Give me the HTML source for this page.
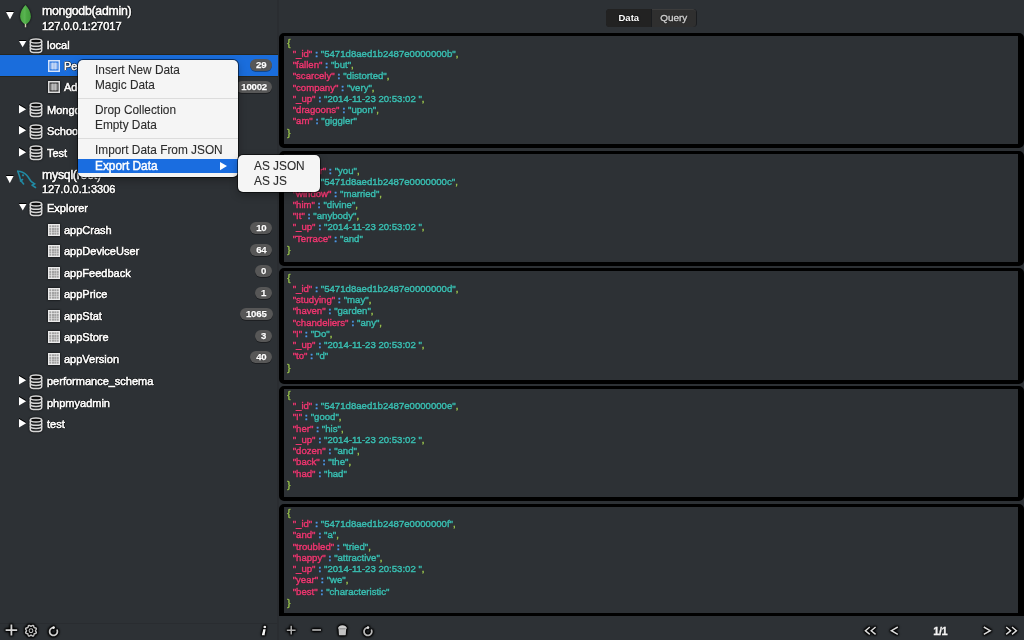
<!DOCTYPE html>
<html><head><meta charset="utf-8">
<style>
*{margin:0;padding:0;box-sizing:border-box}
html,body{width:1024px;height:640px;overflow:hidden;background:#2d3135;font-family:"Liberation Sans",sans-serif;color:#fff}
.mt{-webkit-text-stroke:0.1px currentColor}
.t,.j,.mt,.seg{position:absolute;white-space:nowrap;line-height:20px}
.t{text-shadow:1px 0 0.5px rgba(0,0,0,.75),-1px 0 0.5px rgba(0,0,0,.75),0 1px 0.5px rgba(0,0,0,.75),0 -1px 0.5px rgba(0,0,0,.75);-webkit-text-stroke:0.55px #fff}
.j{-webkit-text-stroke:0.45px currentColor;text-shadow:0 0 1px rgba(0,0,0,.7)}
.j span{-webkit-text-stroke:0.45px currentColor}
.seg{font-weight:bold;text-shadow:0 0 1.5px #000}
.ic{position:absolute;display:block;overflow:visible}
.tsh{filter:drop-shadow(0 0 1px #000) drop-shadow(0 0 1px #000) drop-shadow(0 0 0.5px #000)}
.sh2{filter:drop-shadow(0 -0.5px 0.5px #000) drop-shadow(0 0 0.6px rgba(0,0,0,.8))}
.sh{filter:drop-shadow(0 0 0.8px rgba(0,0,0,.9))}
.sel{position:absolute;left:0;width:277.5px;background:#1a6ddc}
.badge{position:absolute;height:12px;border-radius:6px;background:#575757;color:#fff;font-size:9.6px;font-weight:bold;line-height:12px;letter-spacing:-0.2px;text-align:center;box-shadow:0 1px 0 rgba(0,0,0,.35);text-shadow:0 0 1px #000;-webkit-text-stroke:0.25px #fff}
.card{position:absolute;left:279px;width:745px;background:#2d3135;border-style:solid;border-color:#000;border-width:3px 6px 4px 5px;border-radius:5px}
.k{color:#ec3871}.v{color:#3bbdb1}.c{color:#4e96e2;font-weight:bold}.p{color:#98c04e}
.menu{position:absolute;background:#f5f5f5;border-radius:5px;box-shadow:0 0 0 1px rgba(0,0,0,.55),0 3px 8px rgba(0,0,0,.3)}
.msep{position:absolute;left:78px;width:159.5px;height:1px;background:#dcdcdc}
#sep{position:absolute;left:277.3px;top:0;width:1.5px;height:640px;background:#2a2d31}
#tb1{position:absolute;left:0;top:623px;width:277.3px;height:1px;background:#292c30}
</style></head><body><div id="root" style="position:absolute;left:0;top:0;width:1024px;height:640px;will-change:transform;background:#2d3135">
<div id="sep"></div>
<div id="tb1"></div>
<svg class="ic sh2" style="left:5.6px;top:12.4px" width="7.9" height="7.6" viewBox="0 0 7.9 7.6"><path d="M0 0H7.9L3.95 7.6Z" fill="#fff"/></svg>
<svg class="ic sh" style="left:19px;top:4px" width="13" height="24" viewBox="0 0 13 24"><defs><linearGradient id="lg" x1="0" x2="1" y1="0" y2="0"><stop offset="0" stop-color="#4aa540"/><stop offset="0.45" stop-color="#5ab552"/><stop offset="0.55" stop-color="#4da944"/><stop offset="1" stop-color="#439c3c"/></linearGradient></defs><path d="M6.5 0.9C9.6 4 11.9 8.2 11.9 12.6C11.9 16.4 9.5 18.9 7.1 20.3L6.5 20.9L5.9 20.3C3.5 18.9 1.1 16.4 1.1 12.6C1.1 8.2 3.4 4 6.5 0.9Z" fill="url(#lg)"/><path d="M6.5 19.8V23.3" stroke="#d2ccb4" stroke-width="1.4"/></svg>
<div class="t" style="left:42px;top:0.73px;font-size:12.3px;color:#fdfdfd;letter-spacing:-0.25px">mongodb(admin)</div>
<div class="t" style="left:42px;top:15.86px;font-size:11px;color:#fdfdfd;">127.0.0.1:27017</div>
<svg class="ic sh2" style="left:18.75px;top:40.75px" width="7.3" height="6.3" viewBox="0 0 7.3 6.3"><path d="M0 0H7.3L3.65 6.3Z" fill="#fff"/></svg>
<svg class="ic sh" style="left:29px;top:37.85px" width="14" height="16" viewBox="0 0 14 16"><g fill="none" stroke="#d6d6d6" stroke-width="1.5"><ellipse cx="7" cy="3" rx="5.7" ry="2.0" fill="#0c0c0c"/><path d="M1.3 3V12.4c0 1.2 2.55 2.1 5.7 2.1s5.7-.9 5.7-2.1V3"/><path d="M1.3 6.2c0 1.2 2.55 2.1 5.7 2.1s5.7-.9 5.7-2.1"/><path d="M1.3 9.3c0 1.2 2.55 2.1 5.7 2.1s5.7-.9 5.7-2.1"/></g></svg>
<div class="t" style="left:47px;top:35.36px;font-size:11px;color:#fdfdfd;">local</div>
<div style="position:absolute;left:0;top:54.2px;width:277.5px;height:23.2px;background:#25261f"></div><div class="sel" style="top:55.2px;height:21.1px"></div>
<svg class="ic" style="left:48px;top:59.75px" width="12" height="12" viewBox="0 0 12 12"><rect x="0.75" y="0.75" width="10.5" height="10.5" fill="#1a6de0" stroke="#d6e4fa" stroke-width="1.5"/><rect x="2.4" y="2.6" width="7.2" height="6.8" fill="#a2c0f0"/><path d="M4.8 2.6V9.4M7.2 2.6V9.4" stroke="#d6e4fa" stroke-width="0.9"/></svg>
<div class="t" style="left:64px;top:55.86px;font-size:11px;color:#fdfdfd;">People</div>
<div class="badge" style="left:250px;top:59.10px;width:22.30000000000001px">29</div>
<svg class="ic sh" style="left:48px;top:81.25px" width="12" height="12" viewBox="0 0 12 12"><rect x="0.75" y="0.75" width="10.5" height="10.5" fill="#2a2a2a" stroke="#dedede" stroke-width="1.5"/><rect x="2.4" y="2.6" width="7.2" height="6.8" fill="#9e9e9e"/><path d="M4.8 2.6V9.4M7.2 2.6V9.4" stroke="#d0d0d0" stroke-width="0.9"/></svg>
<div class="t" style="left:64px;top:77.36px;font-size:11px;color:#fdfdfd;">Address</div>
<div class="badge" style="left:236px;top:80.60px;width:36.30000000000001px">10002</div>
<svg class="ic sh2" style="left:18.7px;top:104.65px" width="7.2" height="8.4" viewBox="0 0 7.2 8.4"><path d="M0 0L7.2 4.2L0 8.4Z" fill="#fff"/></svg>
<svg class="ic sh" style="left:29px;top:102.35px" width="14" height="16" viewBox="0 0 14 16"><g fill="none" stroke="#d6d6d6" stroke-width="1.5"><ellipse cx="7" cy="3" rx="5.7" ry="2.0" fill="#0c0c0c"/><path d="M1.3 3V12.4c0 1.2 2.55 2.1 5.7 2.1s5.7-.9 5.7-2.1V3"/><path d="M1.3 6.2c0 1.2 2.55 2.1 5.7 2.1s5.7-.9 5.7-2.1"/><path d="M1.3 9.3c0 1.2 2.55 2.1 5.7 2.1s5.7-.9 5.7-2.1"/></g></svg>
<div class="t" style="left:47px;top:99.86px;font-size:11px;color:#fdfdfd;">MongoDB</div>
<svg class="ic sh2" style="left:18.7px;top:126.15px" width="7.2" height="8.4" viewBox="0 0 7.2 8.4"><path d="M0 0L7.2 4.2L0 8.4Z" fill="#fff"/></svg>
<svg class="ic sh" style="left:29px;top:123.85px" width="14" height="16" viewBox="0 0 14 16"><g fill="none" stroke="#d6d6d6" stroke-width="1.5"><ellipse cx="7" cy="3" rx="5.7" ry="2.0" fill="#0c0c0c"/><path d="M1.3 3V12.4c0 1.2 2.55 2.1 5.7 2.1s5.7-.9 5.7-2.1V3"/><path d="M1.3 6.2c0 1.2 2.55 2.1 5.7 2.1s5.7-.9 5.7-2.1"/><path d="M1.3 9.3c0 1.2 2.55 2.1 5.7 2.1s5.7-.9 5.7-2.1"/></g></svg>
<div class="t" style="left:47px;top:121.36px;font-size:11px;color:#fdfdfd;">School</div>
<svg class="ic sh2" style="left:18.7px;top:147.65px" width="7.2" height="8.4" viewBox="0 0 7.2 8.4"><path d="M0 0L7.2 4.2L0 8.4Z" fill="#fff"/></svg>
<svg class="ic sh" style="left:29px;top:145.35px" width="14" height="16" viewBox="0 0 14 16"><g fill="none" stroke="#d6d6d6" stroke-width="1.5"><ellipse cx="7" cy="3" rx="5.7" ry="2.0" fill="#0c0c0c"/><path d="M1.3 3V12.4c0 1.2 2.55 2.1 5.7 2.1s5.7-.9 5.7-2.1V3"/><path d="M1.3 6.2c0 1.2 2.55 2.1 5.7 2.1s5.7-.9 5.7-2.1"/><path d="M1.3 9.3c0 1.2 2.55 2.1 5.7 2.1s5.7-.9 5.7-2.1"/></g></svg>
<div class="t" style="left:47px;top:142.86px;font-size:11px;color:#fdfdfd;">Test</div>
<svg class="ic sh2" style="left:5.8px;top:175.8px" width="7.6" height="7.3" viewBox="0 0 7.6 7.3"><path d="M0 0H7.6L3.8 7.3Z" fill="#fff"/></svg>
<svg class="ic" style="left:16px;top:169px" width="22" height="21" viewBox="0 0 22 21"><g fill="none" stroke="#2189a3" stroke-width="1.6" stroke-linecap="round" stroke-linejoin="round"><path d="M1.8 2.2C4.5 2.2 8 3.5 10.5 6C12.5 8 13.5 10.5 15 12.3C16 13.5 17.5 14 18.8 14.8L16 16.2L19.5 18.5"/><path d="M1.8 2.2C2.5 4.5 3.5 6.5 4 9C4.3 10.5 4.5 12 6 13L7.6 15"/><path d="M6.5 10.5L4.5 12"/></g><circle cx="7" cy="6.3" r="1.1" fill="#2189a3"/></svg>
<div class="t" style="left:42px;top:164.53px;font-size:12.3px;color:#fdfdfd;letter-spacing:-0.25px">mysql(root)</div>
<div class="t" style="left:42px;top:179.26px;font-size:11px;color:#fdfdfd;">127.0.0.1:3306</div>
<svg class="ic sh2" style="left:18.75px;top:203.75px" width="7.5" height="6.5" viewBox="0 0 7.5 6.5"><path d="M0 0H7.5L3.75 6.5Z" fill="#fff"/></svg>
<svg class="ic sh" style="left:29px;top:201.10px" width="14" height="16" viewBox="0 0 14 16"><g fill="none" stroke="#d6d6d6" stroke-width="1.5"><ellipse cx="7" cy="3" rx="5.7" ry="2.0" fill="#0c0c0c"/><path d="M1.3 3V12.4c0 1.2 2.55 2.1 5.7 2.1s5.7-.9 5.7-2.1V3"/><path d="M1.3 6.2c0 1.2 2.55 2.1 5.7 2.1s5.7-.9 5.7-2.1"/><path d="M1.3 9.3c0 1.2 2.55 2.1 5.7 2.1s5.7-.9 5.7-2.1"/></g></svg>
<div class="t" style="left:47px;top:198.36px;font-size:11px;color:#fdfdfd;">Explorer</div>
<svg class="ic sh" style="left:48px;top:223.6px" width="12" height="12" viewBox="0 0 12 12"><rect x="0" y="0" width="12" height="12" fill="#ebebeb"/><g fill="#a2a2a2"><rect x="1.3" y="1.3" width="2" height="2"/><rect x="4" y="1.3" width="2" height="2"/><rect x="6.3" y="1.3" width="2" height="2"/><rect x="8.7" y="1.3" width="2" height="2"/><rect x="1.3" y="4" width="2" height="2"/><rect x="4" y="4" width="2" height="2"/><rect x="6.3" y="4" width="2" height="2"/><rect x="8.7" y="4" width="2" height="2"/><rect x="1.3" y="6.3" width="2" height="2"/><rect x="4" y="6.3" width="2" height="2"/><rect x="6.3" y="6.3" width="2" height="2"/><rect x="8.7" y="6.3" width="2" height="2"/><rect x="1.3" y="8.7" width="2" height="2"/><rect x="4" y="8.7" width="2" height="2"/><rect x="6.3" y="8.7" width="2" height="2"/><rect x="8.7" y="8.7" width="2" height="2"/></g></svg>
<div class="t" style="left:64px;top:219.71px;font-size:11px;color:#fdfdfd;">appCrash</div>
<div class="badge" style="left:250.2px;top:222.40px;width:22.30000000000001px">10</div>
<svg class="ic sh" style="left:48px;top:245.1px" width="12" height="12" viewBox="0 0 12 12"><rect x="0" y="0" width="12" height="12" fill="#ebebeb"/><g fill="#a2a2a2"><rect x="1.3" y="1.3" width="2" height="2"/><rect x="4" y="1.3" width="2" height="2"/><rect x="6.3" y="1.3" width="2" height="2"/><rect x="8.7" y="1.3" width="2" height="2"/><rect x="1.3" y="4" width="2" height="2"/><rect x="4" y="4" width="2" height="2"/><rect x="6.3" y="4" width="2" height="2"/><rect x="8.7" y="4" width="2" height="2"/><rect x="1.3" y="6.3" width="2" height="2"/><rect x="4" y="6.3" width="2" height="2"/><rect x="6.3" y="6.3" width="2" height="2"/><rect x="8.7" y="6.3" width="2" height="2"/><rect x="1.3" y="8.7" width="2" height="2"/><rect x="4" y="8.7" width="2" height="2"/><rect x="6.3" y="8.7" width="2" height="2"/><rect x="8.7" y="8.7" width="2" height="2"/></g></svg>
<div class="t" style="left:64px;top:241.21px;font-size:11px;color:#fdfdfd;">appDeviceUser</div>
<div class="badge" style="left:250.2px;top:243.90px;width:22.30000000000001px">64</div>
<svg class="ic sh" style="left:48px;top:266.6px" width="12" height="12" viewBox="0 0 12 12"><rect x="0" y="0" width="12" height="12" fill="#ebebeb"/><g fill="#a2a2a2"><rect x="1.3" y="1.3" width="2" height="2"/><rect x="4" y="1.3" width="2" height="2"/><rect x="6.3" y="1.3" width="2" height="2"/><rect x="8.7" y="1.3" width="2" height="2"/><rect x="1.3" y="4" width="2" height="2"/><rect x="4" y="4" width="2" height="2"/><rect x="6.3" y="4" width="2" height="2"/><rect x="8.7" y="4" width="2" height="2"/><rect x="1.3" y="6.3" width="2" height="2"/><rect x="4" y="6.3" width="2" height="2"/><rect x="6.3" y="6.3" width="2" height="2"/><rect x="8.7" y="6.3" width="2" height="2"/><rect x="1.3" y="8.7" width="2" height="2"/><rect x="4" y="8.7" width="2" height="2"/><rect x="6.3" y="8.7" width="2" height="2"/><rect x="8.7" y="8.7" width="2" height="2"/></g></svg>
<div class="t" style="left:64px;top:262.71px;font-size:11px;color:#fdfdfd;">appFeedback</div>
<div class="badge" style="left:254.8px;top:265.40px;width:17.69999999999999px">0</div>
<svg class="ic sh" style="left:48px;top:288.1px" width="12" height="12" viewBox="0 0 12 12"><rect x="0" y="0" width="12" height="12" fill="#ebebeb"/><g fill="#a2a2a2"><rect x="1.3" y="1.3" width="2" height="2"/><rect x="4" y="1.3" width="2" height="2"/><rect x="6.3" y="1.3" width="2" height="2"/><rect x="8.7" y="1.3" width="2" height="2"/><rect x="1.3" y="4" width="2" height="2"/><rect x="4" y="4" width="2" height="2"/><rect x="6.3" y="4" width="2" height="2"/><rect x="8.7" y="4" width="2" height="2"/><rect x="1.3" y="6.3" width="2" height="2"/><rect x="4" y="6.3" width="2" height="2"/><rect x="6.3" y="6.3" width="2" height="2"/><rect x="8.7" y="6.3" width="2" height="2"/><rect x="1.3" y="8.7" width="2" height="2"/><rect x="4" y="8.7" width="2" height="2"/><rect x="6.3" y="8.7" width="2" height="2"/><rect x="8.7" y="8.7" width="2" height="2"/></g></svg>
<div class="t" style="left:64px;top:284.21px;font-size:11px;color:#fdfdfd;">appPrice</div>
<div class="badge" style="left:254.8px;top:286.90px;width:17.69999999999999px">1</div>
<svg class="ic sh" style="left:48px;top:309.6px" width="12" height="12" viewBox="0 0 12 12"><rect x="0" y="0" width="12" height="12" fill="#ebebeb"/><g fill="#a2a2a2"><rect x="1.3" y="1.3" width="2" height="2"/><rect x="4" y="1.3" width="2" height="2"/><rect x="6.3" y="1.3" width="2" height="2"/><rect x="8.7" y="1.3" width="2" height="2"/><rect x="1.3" y="4" width="2" height="2"/><rect x="4" y="4" width="2" height="2"/><rect x="6.3" y="4" width="2" height="2"/><rect x="8.7" y="4" width="2" height="2"/><rect x="1.3" y="6.3" width="2" height="2"/><rect x="4" y="6.3" width="2" height="2"/><rect x="6.3" y="6.3" width="2" height="2"/><rect x="8.7" y="6.3" width="2" height="2"/><rect x="1.3" y="8.7" width="2" height="2"/><rect x="4" y="8.7" width="2" height="2"/><rect x="6.3" y="8.7" width="2" height="2"/><rect x="8.7" y="8.7" width="2" height="2"/></g></svg>
<div class="t" style="left:64px;top:305.71px;font-size:11px;color:#fdfdfd;">appStat</div>
<div class="badge" style="left:240px;top:308.40px;width:32.5px">1065</div>
<svg class="ic sh" style="left:48px;top:331.1px" width="12" height="12" viewBox="0 0 12 12"><rect x="0" y="0" width="12" height="12" fill="#ebebeb"/><g fill="#a2a2a2"><rect x="1.3" y="1.3" width="2" height="2"/><rect x="4" y="1.3" width="2" height="2"/><rect x="6.3" y="1.3" width="2" height="2"/><rect x="8.7" y="1.3" width="2" height="2"/><rect x="1.3" y="4" width="2" height="2"/><rect x="4" y="4" width="2" height="2"/><rect x="6.3" y="4" width="2" height="2"/><rect x="8.7" y="4" width="2" height="2"/><rect x="1.3" y="6.3" width="2" height="2"/><rect x="4" y="6.3" width="2" height="2"/><rect x="6.3" y="6.3" width="2" height="2"/><rect x="8.7" y="6.3" width="2" height="2"/><rect x="1.3" y="8.7" width="2" height="2"/><rect x="4" y="8.7" width="2" height="2"/><rect x="6.3" y="8.7" width="2" height="2"/><rect x="8.7" y="8.7" width="2" height="2"/></g></svg>
<div class="t" style="left:64px;top:327.21px;font-size:11px;color:#fdfdfd;">appStore</div>
<div class="badge" style="left:254.8px;top:329.90px;width:17.69999999999999px">3</div>
<svg class="ic sh" style="left:48px;top:352.6px" width="12" height="12" viewBox="0 0 12 12"><rect x="0" y="0" width="12" height="12" fill="#ebebeb"/><g fill="#a2a2a2"><rect x="1.3" y="1.3" width="2" height="2"/><rect x="4" y="1.3" width="2" height="2"/><rect x="6.3" y="1.3" width="2" height="2"/><rect x="8.7" y="1.3" width="2" height="2"/><rect x="1.3" y="4" width="2" height="2"/><rect x="4" y="4" width="2" height="2"/><rect x="6.3" y="4" width="2" height="2"/><rect x="8.7" y="4" width="2" height="2"/><rect x="1.3" y="6.3" width="2" height="2"/><rect x="4" y="6.3" width="2" height="2"/><rect x="6.3" y="6.3" width="2" height="2"/><rect x="8.7" y="6.3" width="2" height="2"/><rect x="1.3" y="8.7" width="2" height="2"/><rect x="4" y="8.7" width="2" height="2"/><rect x="6.3" y="8.7" width="2" height="2"/><rect x="8.7" y="8.7" width="2" height="2"/></g></svg>
<div class="t" style="left:64px;top:348.71px;font-size:11px;color:#fdfdfd;">appVersion</div>
<div class="badge" style="left:250.2px;top:351.40px;width:22.30000000000001px">40</div>
<svg class="ic sh2" style="left:18.7px;top:375.9px" width="7.2" height="8.4" viewBox="0 0 7.2 8.4"><path d="M0 0L7.2 4.2L0 8.4Z" fill="#fff"/></svg>
<svg class="ic sh" style="left:29px;top:373.60px" width="14" height="16" viewBox="0 0 14 16"><g fill="none" stroke="#d6d6d6" stroke-width="1.5"><ellipse cx="7" cy="3" rx="5.7" ry="2.0" fill="#0c0c0c"/><path d="M1.3 3V12.4c0 1.2 2.55 2.1 5.7 2.1s5.7-.9 5.7-2.1V3"/><path d="M1.3 6.2c0 1.2 2.55 2.1 5.7 2.1s5.7-.9 5.7-2.1"/><path d="M1.3 9.3c0 1.2 2.55 2.1 5.7 2.1s5.7-.9 5.7-2.1"/></g></svg>
<div class="t" style="left:47px;top:371.11px;font-size:11px;color:#fdfdfd;">performance_schema</div>
<svg class="ic sh2" style="left:18.7px;top:397.4px" width="7.2" height="8.4" viewBox="0 0 7.2 8.4"><path d="M0 0L7.2 4.2L0 8.4Z" fill="#fff"/></svg>
<svg class="ic sh" style="left:29px;top:395.10px" width="14" height="16" viewBox="0 0 14 16"><g fill="none" stroke="#d6d6d6" stroke-width="1.5"><ellipse cx="7" cy="3" rx="5.7" ry="2.0" fill="#0c0c0c"/><path d="M1.3 3V12.4c0 1.2 2.55 2.1 5.7 2.1s5.7-.9 5.7-2.1V3"/><path d="M1.3 6.2c0 1.2 2.55 2.1 5.7 2.1s5.7-.9 5.7-2.1"/><path d="M1.3 9.3c0 1.2 2.55 2.1 5.7 2.1s5.7-.9 5.7-2.1"/></g></svg>
<div class="t" style="left:47px;top:392.61px;font-size:11px;color:#fdfdfd;">phpmyadmin</div>
<svg class="ic sh2" style="left:18.7px;top:418.9px" width="7.2" height="8.4" viewBox="0 0 7.2 8.4"><path d="M0 0L7.2 4.2L0 8.4Z" fill="#fff"/></svg>
<svg class="ic sh" style="left:29px;top:416.60px" width="14" height="16" viewBox="0 0 14 16"><g fill="none" stroke="#d6d6d6" stroke-width="1.5"><ellipse cx="7" cy="3" rx="5.7" ry="2.0" fill="#0c0c0c"/><path d="M1.3 3V12.4c0 1.2 2.55 2.1 5.7 2.1s5.7-.9 5.7-2.1V3"/><path d="M1.3 6.2c0 1.2 2.55 2.1 5.7 2.1s5.7-.9 5.7-2.1"/><path d="M1.3 9.3c0 1.2 2.55 2.1 5.7 2.1s5.7-.9 5.7-2.1"/></g></svg>
<div class="t" style="left:47px;top:414.11px;font-size:11px;color:#fdfdfd;">test</div>
<div class="card" style="top:33.0px;height:115.0px;"></div>
<div class="j" style="left:287.3px;top:32.63px;font-size:9.6px;color:#fdfdfd;"><span class="p">{</span></div>
<div class="j" style="left:287.3px;top:43.88px;font-size:9.6px;color:#fdfdfd;">&nbsp;&nbsp;<span class="k">"_id"</span><span class="c"> : </span><span class="v">"5471d8aed1b2487e0000000b"</span><span class="p">,</span></div>
<div class="j" style="left:287.3px;top:55.13px;font-size:9.6px;color:#fdfdfd;">&nbsp;&nbsp;<span class="k">"fallen"</span><span class="c"> : </span><span class="v">"but"</span><span class="p">,</span></div>
<div class="j" style="left:287.3px;top:66.38px;font-size:9.6px;color:#fdfdfd;">&nbsp;&nbsp;<span class="k">"scarcely"</span><span class="c"> : </span><span class="v">"distorted"</span><span class="p">,</span></div>
<div class="j" style="left:287.3px;top:77.63px;font-size:9.6px;color:#fdfdfd;">&nbsp;&nbsp;<span class="k">"company"</span><span class="c"> : </span><span class="v">"very"</span><span class="p">,</span></div>
<div class="j" style="left:287.3px;top:88.88px;font-size:9.6px;color:#fdfdfd;">&nbsp;&nbsp;<span class="k">"_up"</span><span class="c"> : </span><span class="v">"2014-11-23 20:53:02 "</span><span class="p">,</span></div>
<div class="j" style="left:287.3px;top:100.13px;font-size:9.6px;color:#fdfdfd;">&nbsp;&nbsp;<span class="k">"dragoons"</span><span class="c"> : </span><span class="v">"upon"</span><span class="p">,</span></div>
<div class="j" style="left:287.3px;top:111.38px;font-size:9.6px;color:#fdfdfd;">&nbsp;&nbsp;<span class="k">"am"</span><span class="c"> : </span><span class="v">"giggler"</span></div>
<div class="j" style="left:287.3px;top:122.63px;font-size:9.6px;color:#fdfdfd;"><span class="p">}</span></div>
<div class="card" style="top:151.0px;height:114.7px;"></div>
<div class="j" style="left:287.3px;top:149.83px;font-size:9.6px;color:#fdfdfd;"><span class="p">{</span></div>
<div class="j" style="left:287.3px;top:161.08px;font-size:9.6px;color:#fdfdfd;">&nbsp;&nbsp;<span class="k">"dinner"</span><span class="c"> : </span><span class="v">"you"</span><span class="p">,</span></div>
<div class="j" style="left:287.3px;top:172.33px;font-size:9.6px;color:#fdfdfd;">&nbsp;&nbsp;<span class="k">"_id"</span><span class="c"> : </span><span class="v">"5471d8aed1b2487e0000000c"</span><span class="p">,</span></div>
<div class="j" style="left:287.3px;top:183.58px;font-size:9.6px;color:#fdfdfd;">&nbsp;&nbsp;<span class="k">"window"</span><span class="c"> : </span><span class="v">"married"</span><span class="p">,</span></div>
<div class="j" style="left:287.3px;top:194.83px;font-size:9.6px;color:#fdfdfd;">&nbsp;&nbsp;<span class="k">"him"</span><span class="c"> : </span><span class="v">"divine"</span><span class="p">,</span></div>
<div class="j" style="left:287.3px;top:206.08px;font-size:9.6px;color:#fdfdfd;">&nbsp;&nbsp;<span class="k">"It"</span><span class="c"> : </span><span class="v">"anybody"</span><span class="p">,</span></div>
<div class="j" style="left:287.3px;top:217.33px;font-size:9.6px;color:#fdfdfd;">&nbsp;&nbsp;<span class="k">"_up"</span><span class="c"> : </span><span class="v">"2014-11-23 20:53:02 "</span><span class="p">,</span></div>
<div class="j" style="left:287.3px;top:228.58px;font-size:9.6px;color:#fdfdfd;">&nbsp;&nbsp;<span class="k">"Terrace"</span><span class="c"> : </span><span class="v">"and"</span></div>
<div class="j" style="left:287.3px;top:239.83px;font-size:9.6px;color:#fdfdfd;"><span class="p">}</span></div>
<div class="card" style="top:268.3px;height:115.3px;"></div>
<div class="j" style="left:287.3px;top:267.63px;font-size:9.6px;color:#fdfdfd;"><span class="p">{</span></div>
<div class="j" style="left:287.3px;top:278.88px;font-size:9.6px;color:#fdfdfd;">&nbsp;&nbsp;<span class="k">"_id"</span><span class="c"> : </span><span class="v">"5471d8aed1b2487e0000000d"</span><span class="p">,</span></div>
<div class="j" style="left:287.3px;top:290.13px;font-size:9.6px;color:#fdfdfd;">&nbsp;&nbsp;<span class="k">"studying"</span><span class="c"> : </span><span class="v">"may"</span><span class="p">,</span></div>
<div class="j" style="left:287.3px;top:301.38px;font-size:9.6px;color:#fdfdfd;">&nbsp;&nbsp;<span class="k">"haven"</span><span class="c"> : </span><span class="v">"garden"</span><span class="p">,</span></div>
<div class="j" style="left:287.3px;top:312.63px;font-size:9.6px;color:#fdfdfd;">&nbsp;&nbsp;<span class="k">"chandeliers"</span><span class="c"> : </span><span class="v">"any"</span><span class="p">,</span></div>
<div class="j" style="left:287.3px;top:323.88px;font-size:9.6px;color:#fdfdfd;">&nbsp;&nbsp;<span class="k">"I"</span><span class="c"> : </span><span class="v">"Do"</span><span class="p">,</span></div>
<div class="j" style="left:287.3px;top:335.13px;font-size:9.6px;color:#fdfdfd;">&nbsp;&nbsp;<span class="k">"_up"</span><span class="c"> : </span><span class="v">"2014-11-23 20:53:02 "</span><span class="p">,</span></div>
<div class="j" style="left:287.3px;top:346.38px;font-size:9.6px;color:#fdfdfd;">&nbsp;&nbsp;<span class="k">"to"</span><span class="c"> : </span><span class="v">"d"</span></div>
<div class="j" style="left:287.3px;top:357.63px;font-size:9.6px;color:#fdfdfd;"><span class="p">}</span></div>
<div class="card" style="top:386.0px;height:115.0px;"></div>
<div class="j" style="left:287.3px;top:384.93px;font-size:9.6px;color:#fdfdfd;"><span class="p">{</span></div>
<div class="j" style="left:287.3px;top:396.18px;font-size:9.6px;color:#fdfdfd;">&nbsp;&nbsp;<span class="k">"_id"</span><span class="c"> : </span><span class="v">"5471d8aed1b2487e0000000e"</span><span class="p">,</span></div>
<div class="j" style="left:287.3px;top:407.43px;font-size:9.6px;color:#fdfdfd;">&nbsp;&nbsp;<span class="k">"I"</span><span class="c"> : </span><span class="v">"good"</span><span class="p">,</span></div>
<div class="j" style="left:287.3px;top:418.68px;font-size:9.6px;color:#fdfdfd;">&nbsp;&nbsp;<span class="k">"her"</span><span class="c"> : </span><span class="v">"his"</span><span class="p">,</span></div>
<div class="j" style="left:287.3px;top:429.93px;font-size:9.6px;color:#fdfdfd;">&nbsp;&nbsp;<span class="k">"_up"</span><span class="c"> : </span><span class="v">"2014-11-23 20:53:02 "</span><span class="p">,</span></div>
<div class="j" style="left:287.3px;top:441.18px;font-size:9.6px;color:#fdfdfd;">&nbsp;&nbsp;<span class="k">"dozen"</span><span class="c"> : </span><span class="v">"and"</span><span class="p">,</span></div>
<div class="j" style="left:287.3px;top:452.43px;font-size:9.6px;color:#fdfdfd;">&nbsp;&nbsp;<span class="k">"back"</span><span class="c"> : </span><span class="v">"the"</span><span class="p">,</span></div>
<div class="j" style="left:287.3px;top:463.68px;font-size:9.6px;color:#fdfdfd;">&nbsp;&nbsp;<span class="k">"had"</span><span class="c"> : </span><span class="v">"had"</span></div>
<div class="j" style="left:287.3px;top:474.93px;font-size:9.6px;color:#fdfdfd;"><span class="p">}</span></div>
<div class="card" style="top:503.6px;height:112.8px;border-bottom-width:3px;border-radius:5px 5px 0 0;"></div>
<div class="j" style="left:287.3px;top:502.93px;font-size:9.6px;color:#fdfdfd;"><span class="p">{</span></div>
<div class="j" style="left:287.3px;top:514.18px;font-size:9.6px;color:#fdfdfd;">&nbsp;&nbsp;<span class="k">"_id"</span><span class="c"> : </span><span class="v">"5471d8aed1b2487e0000000f"</span><span class="p">,</span></div>
<div class="j" style="left:287.3px;top:525.43px;font-size:9.6px;color:#fdfdfd;">&nbsp;&nbsp;<span class="k">"and"</span><span class="c"> : </span><span class="v">"a"</span><span class="p">,</span></div>
<div class="j" style="left:287.3px;top:536.68px;font-size:9.6px;color:#fdfdfd;">&nbsp;&nbsp;<span class="k">"troubled"</span><span class="c"> : </span><span class="v">"tried"</span><span class="p">,</span></div>
<div class="j" style="left:287.3px;top:547.93px;font-size:9.6px;color:#fdfdfd;">&nbsp;&nbsp;<span class="k">"happy"</span><span class="c"> : </span><span class="v">"attractive"</span><span class="p">,</span></div>
<div class="j" style="left:287.3px;top:559.18px;font-size:9.6px;color:#fdfdfd;">&nbsp;&nbsp;<span class="k">"_up"</span><span class="c"> : </span><span class="v">"2014-11-23 20:53:02 "</span><span class="p">,</span></div>
<div class="j" style="left:287.3px;top:570.43px;font-size:9.6px;color:#fdfdfd;">&nbsp;&nbsp;<span class="k">"year"</span><span class="c"> : </span><span class="v">"we"</span><span class="p">,</span></div>
<div class="j" style="left:287.3px;top:581.68px;font-size:9.6px;color:#fdfdfd;">&nbsp;&nbsp;<span class="k">"best"</span><span class="c"> : </span><span class="v">"characteristic"</span></div>
<div class="j" style="left:287.3px;top:592.93px;font-size:9.6px;color:#fdfdfd;"><span class="p">}</span></div>
<div style="position:absolute;left:605.5px;top:8.5px;width:91.5px;height:18.5px;border-radius:4px;background:#1a1c1f"></div>
<div style="position:absolute;left:606.2px;top:9px;width:45.3px;height:17.6px;border-radius:3.5px 0 0 3.5px;background:#222222"></div>
<div style="position:absolute;left:651.5px;top:9px;width:44.8px;height:17.6px;border-radius:0 3.5px 3.5px 0;background:#2f2f2f;border-top:1px solid #3c3c3c"></div>
<div class="seg" style="left:618.5px;top:7.86px;font-size:9.5px;color:#fff;">Data</div>
<div class="seg" style="left:660.3px;top:7.73px;font-size:9.9px;color:#d0d0d0;font-weight:normal;-webkit-text-stroke:0.35px #d0d0d0">Query</div>
<div class="menu" style="left:78px;top:60px;width:159.5px;height:116.8px"></div>
<div class="msep" style="top:98px"></div>
<div class="msep" style="top:138px"></div>
<div style="position:absolute;left:78px;top:158.7px;width:159.5px;height:14.5px;background:#1a6de0"></div>
<svg class="ic" style="left:220.3px;top:161.6px" width="7" height="8.2" viewBox="0 0 7 8.2"><path d="M0 0L7 4.1L0 8.2Z" fill="#fff"/></svg>
<div class="menu" style="left:237.5px;top:155.3px;width:82px;height:36.7px"></div>
<div class="mt" style="left:95px;top:60.28px;font-size:11.85px;color:#2c2c2c;">Insert New Data</div>
<div class="mt" style="left:95px;top:75.28px;font-size:11.85px;color:#2c2c2c;">Magic Data</div>
<div class="mt" style="left:95px;top:100.28px;font-size:11.85px;color:#2c2c2c;">Drop Collection</div>
<div class="mt" style="left:95px;top:115.18px;font-size:11.85px;color:#2c2c2c;">Empty Data</div>
<div class="mt" style="left:95px;top:140.08px;font-size:11.85px;color:#2c2c2c;">Import Data From JSON</div>
<div class="mt" style="left:95px;top:155.58px;font-size:11.85px;color:#fff;-webkit-text-stroke:0.45px #fff">Export Data</div>
<div class="mt" style="left:254px;top:155.58px;font-size:11.85px;color:#2c2c2c;">AS JSON</div>
<div class="mt" style="left:254px;top:170.58px;font-size:11.85px;color:#2c2c2c;">AS JS</div>
<!-- bottom toolbars -->
<svg class="ic tsh" style="left:0;top:620px" width="70" height="20" viewBox="0 620 70 20">
 <defs><filter id="ds" x="-50%" y="-50%" width="200%" height="200%"><feGaussianBlur in="SourceAlpha" stdDeviation="0.6"/><feComponentTransfer><feFuncA type="linear" slope="2.2"/></feComponentTransfer><feMerge><feMergeNode/><feMergeNode in="SourceGraphic"/></feMerge></filter></defs>
 <g>
  <path d="M5.6 630.1H17.2M11.4 624.6V635.4" stroke="#d6d6d6" stroke-width="1.8" fill="none"/>
  <path d="M36.27 632.88 L36.15 633.07 L35.98 633.24 L35.76 633.36 L35.51 633.46 L35.24 633.53 L34.98 633.59 L34.73 633.64 L34.51 633.70 L34.33 633.77 L34.18 633.88 L34.07 634.03 L34.00 634.21 L33.94 634.43 L33.89 634.68 L33.83 634.94 L33.76 635.21 L33.66 635.46 L33.54 635.68 L33.37 635.85 L33.18 635.97 L32.96 636.02 L32.73 636.01 L32.48 635.95 L32.23 635.84 L31.99 635.70 L31.77 635.55 L31.56 635.41 L31.36 635.30 L31.18 635.23 L31.00 635.20 L30.82 635.23 L30.64 635.30 L30.44 635.41 L30.23 635.55 L30.01 635.70 L29.77 635.84 L29.52 635.95 L29.27 636.01 L29.04 636.02 L28.82 635.97 L28.63 635.85 L28.46 635.68 L28.34 635.46 L28.24 635.21 L28.17 634.94 L28.11 634.68 L28.06 634.43 L28.00 634.21 L27.93 634.03 L27.82 633.88 L27.67 633.77 L27.49 633.70 L27.27 633.64 L27.02 633.59 L26.76 633.53 L26.49 633.46 L26.24 633.36 L26.02 633.24 L25.85 633.07 L25.73 632.88 L25.68 632.66 L25.69 632.43 L25.75 632.18 L25.86 631.93 L26.00 631.69 L26.15 631.47 L26.29 631.26 L26.40 631.06 L26.47 630.88 L26.50 630.70 L26.47 630.52 L26.40 630.34 L26.29 630.14 L26.15 629.93 L26.00 629.71 L25.86 629.47 L25.75 629.22 L25.69 628.97 L25.68 628.74 L25.73 628.52 L25.85 628.33 L26.02 628.16 L26.24 628.04 L26.49 627.94 L26.76 627.87 L27.02 627.81 L27.27 627.76 L27.49 627.70 L27.67 627.63 L27.82 627.52 L27.93 627.37 L28.00 627.19 L28.06 626.97 L28.11 626.72 L28.17 626.46 L28.24 626.19 L28.34 625.94 L28.46 625.72 L28.63 625.55 L28.82 625.43 L29.04 625.38 L29.27 625.39 L29.52 625.45 L29.77 625.56 L30.01 625.70 L30.23 625.85 L30.44 625.99 L30.64 626.10 L30.82 626.17 L31.00 626.20 L31.18 626.17 L31.36 626.10 L31.56 625.99 L31.77 625.85 L31.99 625.70 L32.23 625.56 L32.48 625.45 L32.73 625.39 L32.96 625.38 L33.18 625.43 L33.37 625.55 L33.54 625.72 L33.66 625.94 L33.76 626.19 L33.83 626.46 L33.89 626.72 L33.94 626.97 L34.00 627.19 L34.07 627.37 L34.18 627.52 L34.33 627.63 L34.51 627.70 L34.73 627.76 L34.98 627.81 L35.24 627.87 L35.51 627.94 L35.76 628.04 L35.98 628.16 L36.15 628.33 L36.27 628.52 L36.32 628.74 L36.31 628.97 L36.25 629.22 L36.14 629.47 L36.00 629.71 L35.85 629.93 L35.71 630.14 L35.60 630.34 L35.53 630.52 L35.50 630.70 L35.53 630.88 L35.60 631.06 L35.71 631.26 L35.85 631.47 L36.00 631.69 L36.14 631.93 L36.25 632.18 L36.31 632.43 L36.32 632.66 L36.27 632.88Z" fill="none" stroke="#c4c4c4" stroke-width="1.5"/>
  <circle cx="31" cy="630.7" r="1.9" fill="none" stroke="#c4c4c4" stroke-width="1.1"/>
  <path d="M53.4 627.6A3.9 3.9 0 1 0 57.2 630.2" fill="none" stroke="#cfcfcf" stroke-width="1.8" stroke-linecap="round"/>
  <circle cx="53.6" cy="627.6" r="1.3" fill="#f2f2f2"/>
 </g>
</svg>
<svg class="ic tsh" style="left:254px;top:620px" width="20" height="20" viewBox="254 620 20 20"><circle cx="264.8" cy="627" r="1.35" fill="#eeeeee"/><path d="M263.2 629.3H265.7L265.3 631.2L264.7 634.2C264.6 634.9 264.9 635.1 264.9 635.3H262C261.8 634.8 262.1 634 262.3 633.2L262.9 631Z" fill="#f6f6f6"/></svg>
<svg class="ic tsh" style="left:280px;top:620px" width="100" height="20" viewBox="280 620 100 20">
 <g>
  <path d="M286.8 630.2H295.6M291.2 625.8V634.6" stroke="#b0b0b0" stroke-width="1.5" fill="none"/>
  <path d="M312.2 630H321" stroke="#b0b0b0" stroke-width="1.7" fill="none"/>
  <path d="M338 628.8C338 626.6 339.8 625.2 342.4 625.2C345 625.2 346.9 626.6 346.9 628.8Z" fill="#cdcdcd"/>
  <path d="M338.5 628.6H346.2L345.8 634.4C345.7 635 345.3 635.3 344.8 635.3H340C339.4 635.3 339 635 338.9 634.4Z" fill="#c2c2c2"/>
  <path d="M340 628.9H345" stroke="#8a8a8a" stroke-width="0.7"/>
  <path d="M367.8 627.6A3.9 3.9 0 1 0 371.6 630.2" fill="none" stroke="#b8b8b8" stroke-width="1.8" stroke-linecap="round"/>
  <circle cx="368" cy="627.6" r="1.3" fill="#e0e0e0"/>
 </g>
</svg>
<svg class="ic tsh" style="left:860px;top:620px" width="164" height="20" viewBox="860 620 164 20">
 <g stroke="#dcdcdc" fill="none" stroke-width="1.5" stroke-linejoin="miter">
  <path d="M869.8 627L865.4 630.7L869.8 634.4M875.6 627L871.2 630.7L875.6 634.4"/>
  <path d="M897.8 627L891.4 630.7L897.8 634.4"/>
  <path d="M983.8 627L990.2 630.7L983.8 634.4"/>
  <path d="M1006.2 627L1010.6 630.7L1006.2 634.4M1012 627L1016.4 630.7L1012 634.4"/>
 </g>
</svg>
<div class="seg" style="left:933.2px;top:621.16px;font-size:11px;color:#f4f4f4;-webkit-text-stroke:0.3px #f4f4f4;letter-spacing:-0.4px">1/1</div>
</div></body></html>
